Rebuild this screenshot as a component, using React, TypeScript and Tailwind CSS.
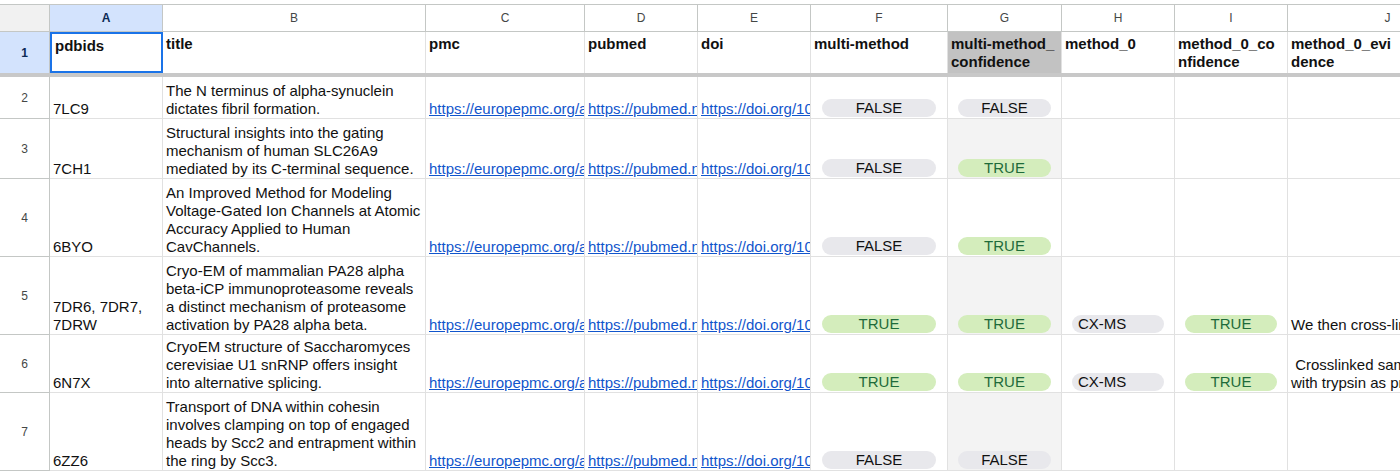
import React from "react"

type Row = {
  n: number
  h: string
  a: string[]
  b: string[]
  f: boolean
  g: boolean
  gGray: boolean
  method?: string
  conf?: boolean
  ev?: string[]
}

const rows: Row[] = [
  { n: 2, h: "h-[42px]", a: ["7LC9"], b: ["The N terminus of alpha-synuclein", "dictates fibril formation."], f: false, g: false, gGray: false },
  { n: 3, h: "h-[60px]", a: ["7CH1"], b: ["Structural insights into the gating", "mechanism of human SLC26A9", "mediated by its C-terminal sequence."], f: false, g: true, gGray: true },
  { n: 4, h: "h-[78px]", a: ["6BYO"], b: ["An Improved Method for Modeling", "Voltage-Gated Ion Channels at Atomic", "Accuracy Applied to Human", "CavChannels."], f: false, g: true, gGray: false },
  {
    n: 5, h: "h-[78px]", a: ["7DR6, 7DR7,", "7DRW"],
    b: ["Cryo-EM of mammalian PA28 alpha", "beta-iCP immunoproteasome reveals", "a distinct mechanism of proteasome", "activation by PA28 alpha beta."],
    f: true, g: true, gGray: true, method: "CX-MS", conf: true, ev: ["We then cross-linked the complex"],
  },
  {
    n: 6, h: "h-[58px]", a: ["6N7X"],
    b: ["CryoEM structure of Saccharomyces", "cerevisiae U1 snRNP offers insight", "into alternative splicing."],
    f: true, g: true, gGray: false, method: "CX-MS", conf: true, ev: [" Crosslinked samples were digested", "with trypsin as protease"],
  },
  { n: 7, h: "h-[78px]", a: ["6ZZ6"], b: ["Transport of DNA within cohesin", "involves clamping on top of engaged", "heads by Scc2 and entrapment within", "the ring by Scc3."], f: false, g: false, gGray: true },
]

const cols = [
  { l: "A", w: "w-[113px]", t: "pdbids" },
  { l: "B", w: "w-[263px]", t: "title" },
  { l: "C", w: "w-[159px]", t: "pmc" },
  { l: "D", w: "w-[113px]", t: "pubmed" },
  { l: "E", w: "w-[113px]", t: "doi" },
  { l: "F", w: "w-[137px]", t: "multi-method" },
  { l: "G", w: "w-[114px]", t: "multi-method_\nconfidence" },
  { l: "H", w: "w-[113px]", t: "method_0" },
  { l: "I", w: "w-[113px]", t: "method_0_co\nnfidence" },
  { l: "J", w: "w-[200px]", t: "method_0_evi\ndence" },
]

const cell = "shrink-0 border-r border-b border-[#e1e1e1] overflow-hidden flex flex-col justify-end px-[3px] whitespace-pre"

function Lines({ items }: { items: string[] }) {
  return <>{items.map((s, i) => <div key={i}>{s}</div>)}</>
}

function Chip({ on, label, left }: { on?: boolean; label?: string; left?: boolean }) {
  const text = label ?? (on ? "TRUE" : "FALSE")
  return (
    <div
      className={
        "h-[18px] mx-[7px] mb-[1px] rounded-full leading-[18px] " +
        (left ? "pl-[6px] " : "text-center ") +
        (on ? "bg-[#d4edbc] text-[#1e6b3a]" : "bg-[#e8e8ec] text-[#111]")
      }
    >
      {text}
    </div>
  )
}

function Link({ text }: { text: string }) {
  return <div className="text-[#1155cc] underline">{text}</div>
}

export default function App() {
  return (
    <div
      className="w-[1400px] h-[474px] overflow-hidden bg-white text-[15px] leading-[18px] text-[#111]"
      style={{ fontFamily: '"Liberation Sans", Arial, sans-serif' }}
    >
      <div className="h-[4px] bg-white" />

      {/* letras de columna */}
      <div className="flex h-[28px] w-max border-t border-[#c4c7c5]">
        <div className="w-[50px] shrink-0 bg-[#f1f1f1] border-r border-b border-[#c4c7c5]" />
        {cols.map(c => (
          <div
            key={c.l}
            className={
              c.w +
              " shrink-0 flex items-center justify-center text-[12px] border-r border-b border-[#c4c7c5] " +
              (c.l === "A" ? "bg-[#d3e3fd] font-bold text-[#0b2a55]" : "bg-white text-[#444746]")
            }
          >
            {c.l}
          </div>
        ))}
      </div>

      {/* fila 1 (cabecera congelada) */}
      <div className="flex h-[41px] w-max">
        <div className="w-[50px] shrink-0 bg-[#d3e3fd] border-r border-[#c4c7c5] flex items-center justify-center text-[12px] font-bold text-[#0b2a55]">
          1
        </div>
        {cols.map(c => (
          <div
            key={c.l}
            className={
              c.w +
              " shrink-0 overflow-hidden whitespace-pre font-bold px-[3px] pt-[3px] " +
              (c.l === "A"
                ? "border-2 border-[#1a73e8] px-[2px] pt-[2px]"
                : "border-r border-[#e1e1e1] ") +
              (c.l === "G" ? "bg-[#c2c2c2]" : "")
            }
          >
            {c.t}
          </div>
        ))}
      </div>

      {/* barra de inmovilizado */}
      <div className="h-[4px] w-max min-w-[1400px] bg-[#c8c8c8]" />

      {rows.map(r => (
        <div key={r.n} className={"flex w-max " + r.h}>
          <div className="w-[50px] shrink-0 border-r border-b border-[#c4c7c5] flex items-center justify-center text-[12px] text-[#444746]">
            {r.n}
          </div>
          <div className={cell + " w-[113px]"}><Lines items={r.a} /></div>
          <div className={cell + " w-[263px]"}><Lines items={r.b} /></div>
          <div className={cell + " w-[159px]"}><Link text="https://europepmc.org/article/MED/" /></div>
          <div className={cell + " w-[113px]"}><Link text="https://pubmed.ncbi.nlm.nih.gov/" /></div>
          <div className={cell + " w-[113px]"}><Link text="https://doi.org/10.1038/" /></div>
          <div className={cell + " w-[137px] px-[4px]"}><Chip on={r.f} /></div>
          <div className={cell + " w-[114px] px-[2px] " + (r.gGray ? "bg-[#f3f3f3]" : "")}>
            <Chip on={r.g} />
          </div>
          <div className={cell + " w-[113px] px-[3px]"}>{r.method && <Chip label={r.method} left />}</div>
          <div className={cell + " w-[113px] px-[3px]"}>{r.conf !== undefined && <Chip on={r.conf} />}</div>
          <div className={cell + " w-[200px]"}>{r.ev && <Lines items={r.ev} />}</div>
        </div>
      ))}
    </div>
  )
}
